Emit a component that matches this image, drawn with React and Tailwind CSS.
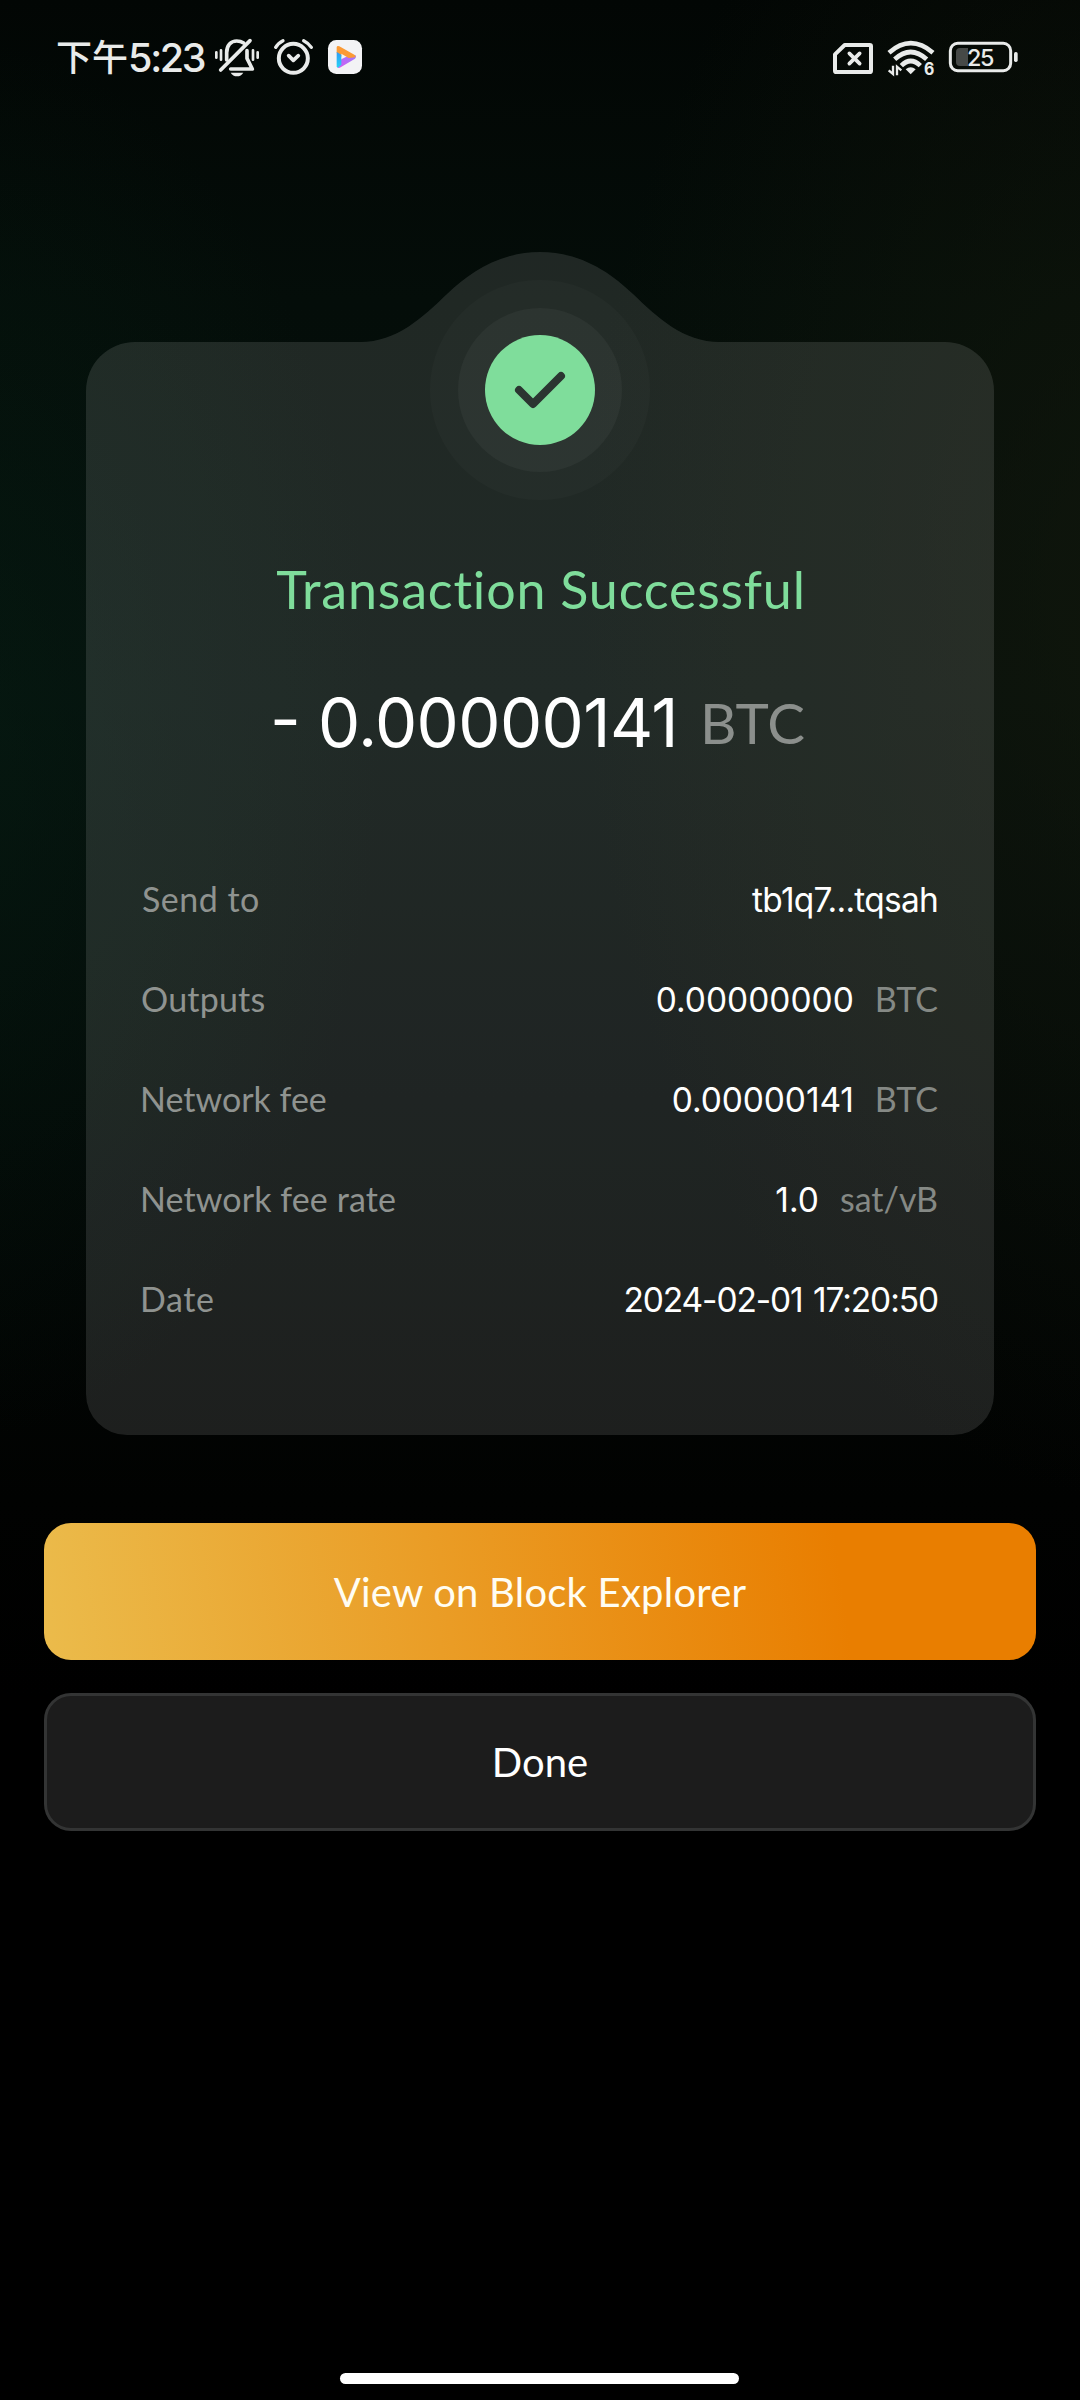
const INK = "#e9ebea";

function BellOffIcon() {
  return (
    <svg className="h-[75px] w-[47px]" viewBox="519 0 141 225" fill="none" stroke={INK} strokeLinecap="round" strokeLinejoin="round">
      <path d="M560 120 V98 C560 76 573 63 590 63 C599 63 605 65 611 69" strokeWidth="11" />
      <path d="M542 150 L630 62" strokeWidth="11" />
      <path d="M621 92 V115 L637 147 H572" strokeWidth="11" />
      <path d="M572 158 H610 C606 165 599 169 591 169 C583 169 576 165 572 158 Z" fill={INK} stroke="none" />
      <path d="M529 97 V113 M543 91 V119 M639 91 V119 M653 97 V113" strokeWidth="8" />
    </svg>
  );
}

function AlarmIcon() {
  return (
    <svg className="h-[75px] w-[41px]" viewBox="699 0 123 225" fill="none" stroke={INK} strokeLinecap="round" strokeLinejoin="round">
      <circle cx="760" cy="115" r="43.5" strokeWidth="12" />
      <path d="M707 82 C712 73 719 67 729 62 M791 62 C801 67 808 73 814 82" strokeWidth="10" />
      <path d="M746 107 L760 121 L775 107" strokeWidth="11" />
    </svg>
  );
}

function PlayerAppIcon() {
  return (
    <svg className="h-[75px] w-[36px]" viewBox="861 0 108 225" fill="none">
      <defs>
        <linearGradient id="violet" x1="0" y1="1" x2="1" y2="0">
          <stop offset="0" stopColor="#d65cf0" />
          <stop offset="1" stopColor="#9a7bff" />
        </linearGradient>
        <linearGradient id="sky" x1="0" y1="0" x2="0" y2="1">
          <stop offset="0" stopColor="#2f9bf5" />
          <stop offset="1" stopColor="#25d3f5" />
        </linearGradient>
      </defs>
      <rect x="864" y="60" width="102" height="102" rx="25" fill="#f3f3f5" />
      <path d="M904 118 L928 106 L947 106 Q950 111 945 116 L902 142 Q895 146 893 142 Z" fill="url(#violet)" />
      <path d="M890 82 Q891 76 898 79 L943 104 Q948 108 946 112 L926 114 L904 101 V110 L890 98 Z" fill="#fb9a35" />
      <path d="M890 96 L904 104 V134 L894 143 Q890 143 890 139 Z" fill="url(#sky)" />
    </svg>
  );
}

function NoSimIcon() {
  return (
    <svg className="h-[75px] w-[42px]" viewBox="66 0 126 225" fill="none" stroke={INK} strokeLinecap="round" strokeLinejoin="round">
      <path d="M104 75 H179 Q183 75 183 79 V152 Q183 156 179 156 H79 Q75 156 75 152 V103 Z" strokeWidth="12" />
      <path d="M118 100 L149 131 M149 100 L118 131" strokeWidth="11" />
    </svg>
  );
}

function WifiIcon() {
  return (
    <svg className="h-[75px] w-[48px]" viewBox="231 0 144 225" fill="none" stroke={INK}>
      <path d="M237 98 Q302 41 369 98" strokeWidth="14" />
      <path d="M254 118 Q302 74 350 118" strokeWidth="14" />
      <path d="M274 137 Q302 109 331 137" strokeWidth="14" />
      <path d="M287 148 Q302 135 317 148 L302 163 Z" fill={INK} stroke="none" />
      <path d="M249 137 V162 L236 151 M261 166 V140 L274 151" strokeWidth="7" />
      <text x="342" y="166" fill={INK} stroke="none" fontFamily="Inter, sans-serif" fontWeight="700" fontSize="53" textLength="31" lengthAdjust="spacingAndGlyphs">6</text>
    </svg>
  );
}

function BatteryIcon() {
  return (
    <svg className="h-[75px] w-[71px]" viewBox="414 0 213 225" fill="none">
      <rect x="421" y="70" width="181" height="82" rx="22" stroke={INK} strokeWidth="9" />
      <rect x="612" y="96" width="11" height="30" rx="5" fill={INK} />
      <path d="M450 84 H474 V138 H450 Q438 138 438 126 V96 Q438 84 450 84 Z" fill="#464947" />
      <text x="471" y="139" fill={INK} fontFamily="Inter, sans-serif" fontWeight="500" fontSize="70" letterSpacing="-4">25</text>
    </svg>
  );
}

function StatusBar() {
  return (
    <header className="flex h-[115px] items-center justify-between pr-[61px] pl-[56px] text-[#e9ebea]">
      <div className="flex items-center">
        <div className="flex w-[157px] items-center whitespace-nowrap">
          <span className="mb-[5px] font-['Noto_Sans_CJK_SC',sans-serif] text-[36px] leading-[52px] font-medium">下午</span>
          <span className="font-['Inter',sans-serif] text-[39.5px] leading-[52px] font-medium tracking-[-2.3px]">5:23</span>
        </div>
        <div className="flex gap-[13px]">
          <BellOffIcon />
          <AlarmIcon />
          <PlayerAppIcon />
        </div>
      </div>
      <div className="flex gap-[13px]">
        <NoSimIcon />
        <WifiIcon />
        <BatteryIcon />
      </div>
    </header>
  );
}

function SuccessBadge() {
  return (
    <div className="-mt-[62px] flex size-[220px] items-center justify-center rounded-full bg-white/[0.018]">
      <div className="flex size-[164px] items-center justify-center rounded-full bg-white/[0.04]">
        <div className="flex size-[110px] items-center justify-center rounded-full bg-[#7fdd9b]">
          <svg className="size-[110px]" viewBox="485 335 110 110" fill="none" stroke="#2b3531" strokeWidth="8" strokeLinecap="round" strokeLinejoin="round">
            <path d="M519 390 L533 404 L561 376" />
          </svg>
        </div>
      </div>
    </div>
  );
}

function Row({ label, value, unit, labelClass, valueClass }) {
  return (
    <div className="flex h-[100px] items-baseline justify-between text-[34px] leading-[100px] whitespace-nowrap text-[#8f9390]">
      <dt className={labelClass}>{label}</dt>
      <dd className="flex items-baseline gap-[21px]">
        <span className={"font-['Inter',sans-serif] text-[33.5px] text-white " + valueClass}>{value}</span>
        {unit && <span className="text-[#858985]">{unit}</span>}
      </dd>
    </div>
  );
}

const rows = [
  { label: "Send to", value: "tb1q7...tqsah", labelClass: "pl-px tracking-[0.5px]", valueClass: "tracking-[-0.75px]" },
  { label: "Outputs", value: "0.00000000", unit: "BTC", labelClass: "tracking-[0.2px]", valueClass: "tracking-normal" },
  { label: "Network fee", value: "0.00000141", unit: "BTC", labelClass: "-ml-px tracking-normal", valueClass: "tracking-[-0.1px]" },
  { label: "Network fee rate", value: "1.0", unit: "sat/vB", labelClass: "-ml-px tracking-[0.1px]", valueClass: "tracking-normal" },
  { label: "Date", value: "2024-02-01 17:20:50", labelClass: "-ml-px tracking-[0.6px]", valueClass: "tracking-[-1.1px] [word-spacing:2px]" },
];

export default function App() {
  return (
    <div className="flex h-[2400px] w-[1080px] flex-col overflow-hidden bg-black bg-[radial-gradient(ellipse_420px_700px_at_-40px_740px,rgba(6,32,20,0.5),rgba(6,32,20,0)),radial-gradient(ellipse_560px_900px_at_1140px_600px,rgba(22,26,12,0.6),rgba(22,26,12,0)),linear-gradient(180deg,#020604_0px,#040d09_300px,#050f0c_700px,#030907_1100px,#010201_1500px,#000000_1700px)] font-['Lato',sans-serif]">
      <StatusBar />

      <main className="mt-[137px] flex flex-col">
        <svg className="ml-[355px] block h-[90px] w-[370px]" viewBox="355 252 370 90">
          <path d="M355 342 H360 C397 342 423 317 447 294 C470 272 500 252 540 252 C580 252 610 272 633 294 C657 317 683 342 720 342 H725 Z" fill="#ffffff" fillOpacity="0.112" />
        </svg>

        <section className="mx-[86px] flex h-[1093px] flex-col items-center rounded-t-[49px] rounded-b-[41px] bg-white/[0.112]">
          <SuccessBadge />
          <h1 className="mt-[59px] pl-[2px] text-[52px] leading-[60px] tracking-[0.8px] text-[#7fdd9b]">Transaction Successful</h1>
          <div className="mt-[64px] flex h-[80px] items-center pr-[5px] whitespace-nowrap">
            <span className="mr-[17px] mb-[8px] font-['Inter',sans-serif] text-[67px] leading-[80px] text-white">-</span>
            <span className="mr-[22px] font-['Inter',sans-serif] text-[67px] leading-[80px] tracking-[-0.6px] text-white">0.00000141</span>
            <span className="-mt-[3px] text-[56.5px] leading-[80px] text-[#8b8f8c]">BTC</span>
          </div>
          <dl className="mt-[86px] w-full pr-[56px] pl-[55px]">
            {rows.map((row) => (
              <Row key={row.label} {...row} />
            ))}
          </dl>
        </section>

        <div className="mx-[44px] mt-[88px] flex flex-col gap-[33px]">
          <button className="h-[137px] rounded-[27px] bg-[linear-gradient(82deg,#ebbb4b_0%,#e97e00_80%)] text-[40px] tracking-[0.22px] text-[#fffdf2]">View on Block Explorer</button>
          <button className="h-[138px] rounded-[27px] border-[3px] border-[#333434] bg-[#1c1c1c] text-[40px] text-white">Done</button>
        </div>
      </main>

      <div className="mt-auto mb-[16px] ml-[340px] h-[11px] w-[399px] rounded-full bg-white" />
    </div>
  );
}
